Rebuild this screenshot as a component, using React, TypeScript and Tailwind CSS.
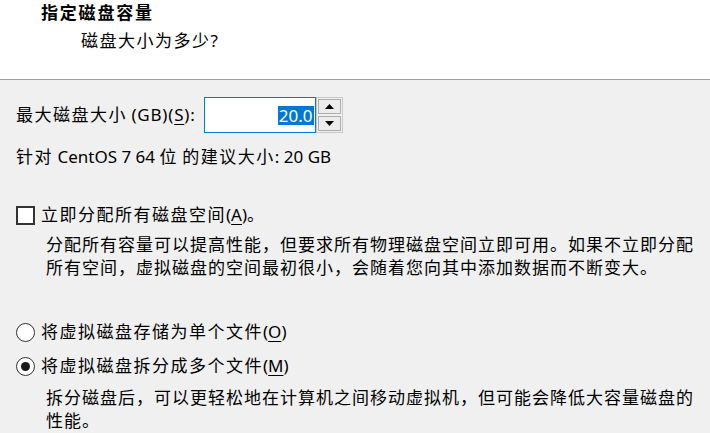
const Zh = ({ children }: { children: React.ReactNode }) => (
  <span className="tracking-[1.5px]">{children}</span>
);

const Key = ({ children }: { children: React.ReactNode }) => (
  <span className="underline underline-offset-[3px]">{children}</span>
);

const Spinner = () => (
  <div className="flex h-[36px] w-[27px] flex-col gap-[2px] border border-[#c8c8c8] bg-[#f0f0f0] p-[1px]">
    <div className="flex flex-1 items-center justify-center border border-[#adadad] bg-[#ececec]">
      <svg width="9" height="5" viewBox="0 0 9 5">
        <polygon points="4.5,0 9,5 0,5" fill="#000" />
      </svg>
    </div>
    <div className="flex flex-1 items-center justify-center border border-[#adadad] bg-[#ececec]">
      <svg width="9" height="5" viewBox="0 0 9 5">
        <polygon points="0,0 9,0 4.5,5" fill="#000" />
      </svg>
    </div>
  </div>
);

const Radio = ({ checked }: { checked?: boolean }) => (
  <div className="flex h-[19px] w-[19px] items-center justify-center rounded-full border-[1.5px] border-[#333] bg-white">
    {checked && <div className="h-[9px] w-[9px] rounded-full bg-[#1a1a1a]" />}
  </div>
);

const App = () => {
  return (
    <div
      className="h-[433px] w-[710px] overflow-hidden bg-[#f0f0f0] text-[17px] text-black"
      style={{ fontFamily: '"Noto Sans", "Noto Sans CJK SC", sans-serif' }}
    >
      <div className="h-[80px] border-b border-[#a0a0a0] bg-white">
        <div className="pl-[41px] leading-[26px] font-bold tracking-[1.8px]">
          指定磁盘容量
        </div>
        <div className="pl-[81px] pt-[2px] leading-[26px]">
          <Zh>磁盘大小为多少</Zh>?
        </div>
      </div>

      <div className="px-[16px]">
        <div className="mt-[17px] flex items-center">
          <span className="leading-[24px]">
            <Zh>最大磁盘大小</Zh> <span className="tracking-[0.8px]">(GB)(<Key>S</Key>):</span>
          </span>
          <div className="ml-[8px] flex h-[36px] w-[112px] items-center justify-end border border-[#0078d7] bg-white pr-[1px]">
            <span className="bg-[#0078d7] px-[1px] leading-[19px] text-white">20.0</span>
          </div>
          <Spinner />
        </div>

        <div className="mt-[12px] leading-[24px]">
          <Zh>针对</Zh> CentOS 7 64 <Zh>位</Zh> <Zh>的建议大小</Zh>: 20 GB
        </div>

        <div className="mt-[34px] flex items-center">
          <div className="h-[19px] w-[19px] border-2 border-[#333] bg-white" />
          <span className="ml-[6px] leading-[24px]">
            <Zh>立即分配所有磁盘空间</Zh>(<Key>A</Key>)<Zh>。</Zh>
          </span>
        </div>

        <div className="mt-[6px] whitespace-nowrap pl-[30px] leading-[23px] tracking-[1px]">
          分配所有容量可以提高性能，但要求所有物理磁盘空间立即可用。如果不立即分配
          <br />
          所有空间，虚拟磁盘的空间最初很小，会随着您向其中添加数据而不断变大。
        </div>

        <div className="mt-[41px] flex items-center">
          <Radio />
          <span className="ml-[6px] leading-[24px]">
            <Zh>将虚拟磁盘存储为单个文件</Zh>(<Key>O</Key>)
          </span>
        </div>

        <div className="mt-[10px] flex items-center">
          <Radio checked />
          <span className="ml-[6px] leading-[24px]">
            <Zh>将虚拟磁盘拆分成多个文件</Zh>(<Key>M</Key>)
          </span>
        </div>

        <div className="mt-[8px] whitespace-nowrap pl-[30px] leading-[23px] tracking-[1px]">
          拆分磁盘后，可以更轻松地在计算机之间移动虚拟机，但可能会降低大容量磁盘的
          <br />
          性能。
        </div>
      </div>
    </div>
  );
};

export default App;
